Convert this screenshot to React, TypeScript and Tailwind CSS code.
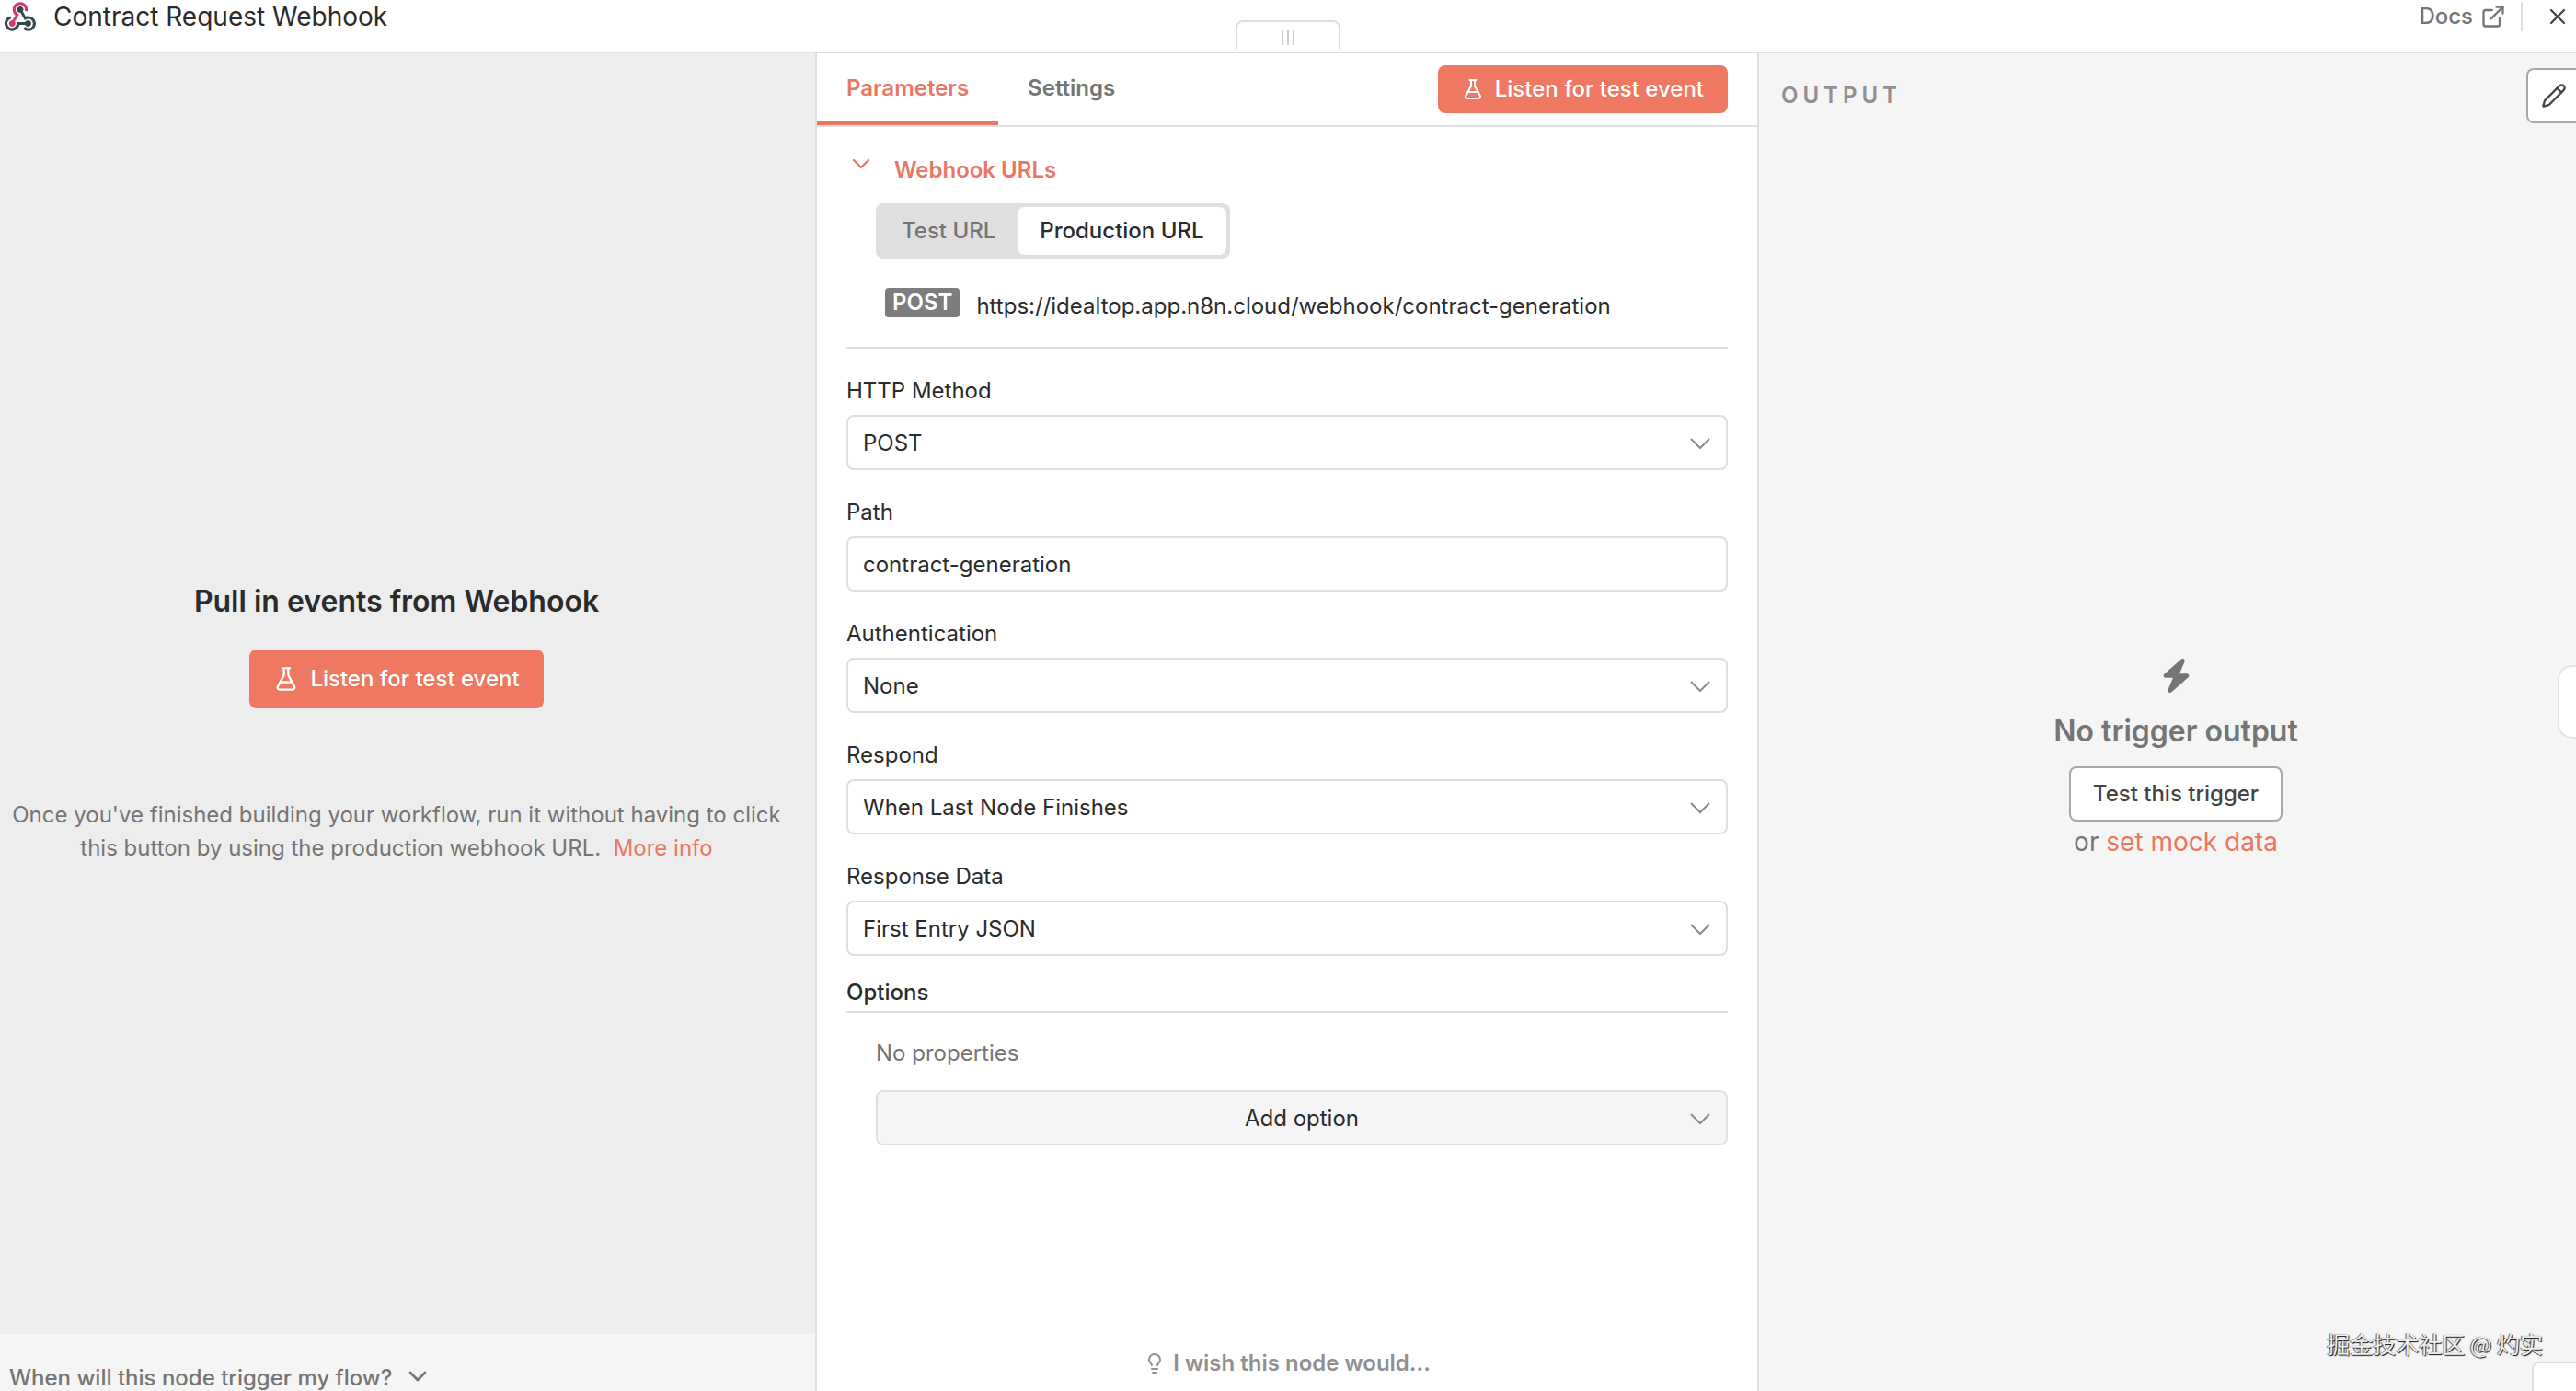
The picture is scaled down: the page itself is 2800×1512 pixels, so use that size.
import React, { useState } from 'react';
import { ChevronDown, ExternalLink, FlaskConical, Lightbulb, Pencil, X } from 'lucide-react';
import { FaBolt } from 'react-icons/fa6';

interface SelectFieldProps {
    id: string;
    label: string;
    options: string[];
}

const WebhookLogo = () => (
    <svg viewBox="0 0 256 240" className="h-8 w-9" aria-hidden="true">
        <path fill="#d23b6b" d="M119.54 100.503c-10.61 17.836-20.775 35.108-31.152 52.25-2.665 4.401-3.984 7.986-1.855 13.58 5.878 15.454-2.414 30.493-17.998 34.575-14.697 3.851-29.016-5.808-31.932-21.543-2.584-13.927 8.224-27.58 23.58-29.757 1.286-.184 2.6-.205 4.762-.367l23.358-39.168C73.612 95.465 64.868 78.39 66.803 57.23c1.368-14.957 7.25-27.883 18-38.477 20.59-20.288 52.002-23.573 76.246-8.001 23.284 14.958 33.948 44.094 24.858 69.031-6.854-1.858-13.756-3.732-21.343-5.79 2.854-13.865.743-26.315-8.608-36.981-6.178-7.042-14.106-10.733-23.12-12.093-18.072-2.73-35.815 8.88-41.08 26.618-5.976 20.132 3.069 36.575 27.784 48.967z" />
        <path fill="#37474f" d="M149.841 79.41c7.475 13.187 15.065 26.573 22.587 39.836 38.02-11.763 66.686 9.284 76.97 31.817 12.422 27.219 3.93 59.457-20.465 76.25-25.04 17.238-56.707 14.293-78.892-7.851 5.654-4.733 11.336-9.487 17.407-14.566 21.912 14.192 41.077 13.524 55.305-3.282 12.133-14.337 11.87-35.714-.615-49.75-14.408-16.197-33.707-16.691-57.035-1.143-9.677-17.168-19.522-34.199-28.893-51.491-3.16-5.828-6.648-9.21-13.77-10.443-11.893-2.062-19.571-12.275-20.032-23.717-.453-11.316 6.214-21.545 16.634-25.53 10.322-3.949 22.435-.762 29.378 8.014 5.674 7.17 7.477 15.24 4.491 24.083-.83 2.466-1.905 4.852-3.07 7.774z" />
        <path fill="#37474f" d="M167.707 187.21h-45.77c-4.387 18.044-13.863 32.612-30.19 41.876-12.693 7.2-26.373 9.641-40.933 7.29-26.808-4.323-48.728-28.456-50.658-55.63-2.184-30.784 18.975-58.147 47.178-64.293 1.947 7.071 3.915 14.21 5.862 21.264-25.876 13.202-34.832 29.836-27.59 50.636 6.375 18.304 24.484 28.337 44.147 24.457 20.08-3.962 30.204-20.65 28.968-47.432 19.036 0 38.088-.197 57.126.097 7.434.117 13.173-.654 18.773-7.208 9.22-10.784 26.191-9.811 36.121.374 10.148 10.409 9.662 27.157-1.077 37.127-10.361 9.62-26.73 9.106-36.424-1.26-1.992-2.136-3.562-4.673-5.533-7.298z" />
    </svg>
);

// Thin arrow shared by every drop-down, sits over the right end of the select
const SelectArrow = () => (
    <svg viewBox="0 0 24 16" className="pointer-events-none absolute right-4.5 top-1/2 h-4 w-6 -translate-y-1/2" fill="none" stroke="#8b8b90" strokeWidth="2" aria-hidden="true">
        <path d="M2 4l10 10L22 4" />
    </svg>
);

const SelectField: React.FC<SelectFieldProps> = ({ id, label, options }) => (
    <div>
        <label htmlFor={id} className="block leading-7">{label}</label>
        <div className="relative mt-3">
            <select id={id} className="block h-15 w-full appearance-none rounded-lg border-2 border-[#dfdfdf] bg-white px-4 pt-0.5">
                {options.map(o => <option key={o}>{o}</option>)}
            </select>
            <SelectArrow />
        </div>
    </div>
);

export default function App() {
    const [tab, setTab] = useState<'parameters' | 'settings'>('parameters');
    const [urlType, setUrlType] = useState('Production URL');
    const [path, setPath] = useState('contract-generation');

    const tabClass = (active: boolean) =>
        active
            ? 'border-b-4 border-[#ea7763] px-8 pt-0.5 font-semibold text-[#ea7763]'
            : 'border-b-4 border-transparent px-8 pt-0.5 font-semibold text-[#757575]';

    return (
        <div className="relative flex min-h-screen flex-col overflow-hidden bg-white font-['Inter',sans-serif] text-2xl text-[#2b2b2b]">
            {/* Header */}
            <header className="relative flex h-[58px] items-start justify-between border-b-2 border-[#dfdfdf] pl-1 pr-1.5">
                <div className="flex items-center gap-4.5 pt-0.5">
                    <WebhookLogo />
                    <h1 className="text-[28px] leading-8">Contract Request Webhook</h1>
                </div>
                <div className="absolute bottom-0.5 left-1/2 flex h-8 w-[114px] -translate-x-1/2 items-center justify-center gap-1 rounded-t-lg border-2 border-b-0 border-[#dfdfdf] pt-1">
                    <span className="h-4 w-0.5 bg-[#d0d0d0]" />
                    <span className="h-4 w-0.5 bg-[#d0d0d0]" />
                    <span className="h-4 w-0.5 bg-[#d0d0d0]" />
                </div>
                <div className="flex h-9 items-center">
                    <a href="#docs" className="flex items-center gap-2 font-medium leading-8 text-[#757575]">
                        Docs
                        <ExternalLink size={28} />
                    </a>
                    <span className="ml-4 h-8 w-0.5 bg-[#dfdfdf]" />
                    <button aria-label="Close" className="ml-6 text-[#444444]"><X size={28} /></button>
                </div>
            </header>

            <main className="grid flex-1 grid-cols-[111fr_128fr_111fr]">
                {/* Input panel */}
                <section className="flex flex-col border-r-2 border-[#dfdfdf] bg-[#ededed]">
                    <div className="flex flex-1 flex-col items-center justify-center pr-6 pt-[66px] text-center">
                        <h2 className="text-[32px] font-semibold leading-10">Pull in events from Webhook</h2>
                        <button className="mt-8 flex h-16 items-center gap-3 rounded-lg bg-[#ee7861] px-6.5 font-medium text-white">
                            <FlaskConical size={28} />
                            Listen for test event
                        </button>
                        <p className="mt-[98px] leading-9 text-[#757575]">
                            Once you've finished building your workflow, run it without having to click<br />
                            this button by using the production webhook URL.&nbsp; <a href="#info" className="text-[#ea7763]">More info</a>
                        </p>
                    </div>
                    <button className="flex h-[62px] items-end gap-3 bg-[#f5f5f5] pl-2.5 font-medium leading-7 text-[#757575]">
                        When will this node trigger my flow?
                        <ChevronDown size={32} />
                    </button>
                </section>

                {/* Parameters panel */}
                <section className="flex flex-col border-r-2 border-[#dfdfdf] bg-white">
                    <div className="flex h-20 items-center justify-between border-b-2 border-[#dfdfdf] pr-8">
                        <div className="flex self-stretch">
                            <button className={tabClass(tab === 'parameters')} onClick={() => setTab('parameters')}>Parameters</button>
                            <button className={tabClass(tab === 'settings')} onClick={() => setTab('settings')}>Settings</button>
                        </div>
                        <button className="flex h-13 items-center gap-3 rounded-lg bg-[#ee7861] px-6.5 font-medium text-white">
                            <FlaskConical size={24} />
                            Listen for test event
                        </button>
                    </div>

                    <div className="flex flex-1 flex-col px-8 pb-4 pt-7">
                        <button className="flex items-start gap-5 font-semibold leading-[38px] text-[#ea7763]">
                            <ChevronDown size={32} strokeWidth={1.75} className="-mt-1" />
                            Webhook URLs
                        </button>

                        <div className="ml-8 mt-[17px] flex self-start rounded-lg bg-[#dfdfdf] p-1">
                            {['Test URL', 'Production URL'].map(name => (
                                <label key={name} className={`flex h-13 items-center rounded-lg px-6 font-medium ${urlType === name ? 'bg-white text-[#2b2b2b]' : 'text-[#757575]'}`}>
                                    <input type="radio" name="url-type" className="sr-only" checked={urlType === name} onChange={() => setUrlType(name)} />
                                    {name}
                                </label>
                            ))}
                        </div>

                        <div className="mt-8 flex items-start gap-4.5 border-b-2 border-[#dfdfdf] pb-6 pl-[42px] leading-10">
                            <span className="h-8 rounded bg-[#7d7d7d] px-2 font-semibold leading-8 text-white">POST</span>
                            <span>https://idealtop.app.n8n.cloud/webhook/contract-generation</span>
                        </div>

                        <div className="mt-8 flex flex-col gap-8">
                            <SelectField id="method" label="HTTP Method" options={['POST', 'GET', 'PUT', 'DELETE']} />
                            <div>
                                <label htmlFor="path" className="block leading-7">Path</label>
                                <input
                                    id="path"
                                    className="mt-3 block h-15 w-full rounded-lg border-2 border-[#dfdfdf] bg-white px-4"
                                    value={path}
                                    onChange={e => setPath(e.target.value)}
                                />
                            </div>
                            <SelectField id="auth" label="Authentication" options={['None', 'Basic Auth', 'Header Auth']} />
                            <SelectField id="respond" label="Respond" options={['When Last Node Finishes', 'Immediately']} />
                            <SelectField id="data" label="Response Data" options={['First Entry JSON', 'All Entries']} />
                        </div>

                        <h3 className="mt-6.5 border-b-2 border-[#dfdfdf] pb-1.5 font-medium leading-7">Options</h3>
                        <p className="ml-8 mt-7.5 leading-7 text-[#757575]">No properties</p>
                        <div className="relative ml-8 mt-6.5">
                            <select aria-label="Add option" className="block h-15 w-full appearance-none rounded-lg border-2 border-[#dfdfdf] bg-[#f5f5f5] px-4 pt-0.5 text-center">
                                <option>Add option</option>
                            </select>
                            <SelectArrow />
                        </div>

                        <button className="mt-auto flex items-center justify-center gap-2 font-semibold leading-7 text-[#909090]">
                            <Lightbulb size={24} />
                            I wish this node would...
                        </button>
                    </div>
                </section>

                {/* Output panel */}
                <section className="flex flex-col bg-[#f5f5f5]">
                    <div className="flex h-20 items-center justify-between pl-6 pt-3">
                        <h2 className="font-semibold tracking-[5px] text-[#909090]">OUTPUT</h2>
                        <button aria-label="Edit output" className="flex h-15 w-[54px] items-center rounded-l-lg border-2 border-r-0 border-[#a8a8a8] bg-white pl-3.5 text-[#444444]">
                            <Pencil size={28} />
                        </button>
                    </div>
                    <div className="flex flex-1 flex-col items-center justify-center pl-4.5 text-[#757575]">
                        <FaBolt size={37} />
                        <h3 className="mt-5.5 text-[32px] font-semibold leading-10">No trigger output</h3>
                        <button className="mt-4.5 h-15 rounded-lg border-2 border-[#a8a8a8] bg-white px-6 font-medium text-[#444444]">Test this trigger</button>
                        <p className="mt-0.5 text-[28px] leading-10">or <a href="#mock" className="text-[#ea7763]">set mock data</a></p>
                    </div>
                </section>
            </main>

            {/* Pieces of the canvas controls that peek in at the right edge */}
            <div className="absolute right-0 top-[723px] h-20 w-5 rounded-l-2xl border-2 border-r-0 border-[#e4e4e4] bg-white" />
            <div className="absolute bottom-0 right-0 h-8 w-12 rounded-tl-lg border-l-2 border-t-2 border-[#dfdfdf] bg-white" />
            <div className="absolute bottom-8.5 right-9 font-['Noto_Sans_CJK_SC',sans-serif] text-[25px] leading-9 text-[#f0f0f0] [text-shadow:1px_1px_1px_#111,-1px_0_1px_#555]">掘金技术社区 @ 灼实</div>
        </div>
    );
}
